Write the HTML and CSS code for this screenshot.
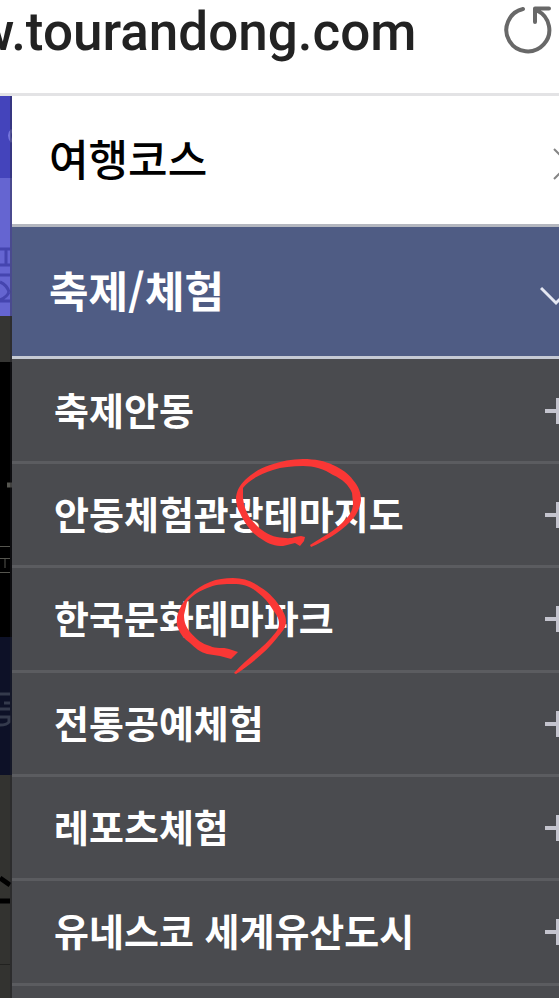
FILE: index.html
```html
<!DOCTYPE html>
<html lang="ko">
<head>
<meta charset="utf-8">
<meta name="viewport" content="width=device-width, initial-scale=1">
<title>여행코스</title>
<link rel="stylesheet" href="styles.css">
</head>
<body>
<header class="address-bar">
  <span class="address">w.tourandong.com</span>
  <button class="reload" type="button" aria-label="새로고침">
    <svg width="50" height="56" viewBox="0 0 50 56" fill="none" stroke="#686868" stroke-width="4" stroke-linecap="round" stroke-linejoin="round"><path d="M19 8A21.500 21.500 0 1 0 33 9.500M45 7.500H31V21"/></svg>
  </button>
</header>
<div class="screen">
  <div class="backdrop" aria-hidden="true">
    <div class="band band-top"><svg width="12" height="82" viewBox="0 0 12 82"><path d="M12 34Q7 39 12 46" fill="none" stroke="#7474dc" stroke-width="3"/></svg></div>
    <div class="band band-title"><svg width="12" height="138" viewBox="0 0 12 138" fill="none" stroke="#4545af" stroke-width="3"><path d="M0 71H10M0 87H10M6 71V87M0 97H10M0 104Q7 107 9 114M0 122Q7 119 9 114M0 123H10"/></svg></div>
    <div class="band band-gray"></div>
    <div class="band band-photo"><svg width="12" height="275" viewBox="0 0 12 275" fill="none" stroke="#55554f"><path d="M7 123H12" stroke-width="5"/><path d="M0 184.500H10M0 196.500H10M5 197V206M0 210.500H10"/></svg></div>
    <div class="band band-navy"><svg width="12" height="138" viewBox="0 0 12 138" fill="none" stroke="#343a4c" stroke-width="3"><path d="M0 57H10M4 66H10M0 72H10M0 80H9V85Q7 88 0 88"/></svg></div>
    <div class="band band-foot"><svg width="12" height="223" viewBox="0 0 12 223" fill="none" stroke="#000"><path d="M0 103L10 110M0 126H10" stroke-width="5"/><path d="M0 189.500H10" stroke="#222220"/></svg></div>
  </div>
  <nav class="menu">
    <a class="section" href="#course"><span>여행코스</span>
      <svg class="arrow" width="20" height="36" viewBox="0 0 20 36" fill="none" stroke="#858585" stroke-width="2"><path d="M2 3L17 18L2 33"/></svg></a>
    <a class="section section-open" href="#festival"><span>축제/체험</span>
      <svg class="arrow" width="32" height="20" viewBox="0 0 32 20" fill="none" stroke="#e4e7f2" stroke-width="3"><path d="M1 2L16 17L31 2"/></svg></a>
    <ul class="submenu">
      <li><a href="#1">축제안동</a><button class="expand" type="button" aria-label="축제안동 펼치기"></button></li>
      <li><a href="#2">안동체험관광테마지도</a><button class="expand" type="button" aria-label="안동체험관광테마지도 펼치기"></button>
        <svg class="pen pen-map" width="130" height="92" viewBox="0 0 130 92" aria-hidden="true"><path d="M3 38C4 31 7 26 12 21C19 14 28 9 37 6C48 2 59 0 70 0C82 0 92 2 100 6C109 10 116 15 120 21C126 28 128 34 128 41C127 50 123 57 117 63C106 74 92 82 78 88L77 86C91 77 103 71 112 61C117 56 120 51 120 44L119 34C116 26 109 20 100 16C91 10 81 7 70 7C59 7 49 8 40 11C27 15 16 21 10 29L10 39C11 47 13 53 17 59C24 68 33 76 44 78C51 79 57 80 62 78L68 77L72 78L71 82L67 87L62 84L50 87C42 87 36 85 30 81C19 75 12 65 7 54C4 49 3 44 3 38Z"/></svg></li>
      <li><a href="#3">한국문화테마파크</a><button class="expand" type="button" aria-label="한국문화테마파크 펼치기"></button>
        <svg class="pen pen-park" width="112" height="98" viewBox="0 0 112 98" aria-hidden="true"><path d="M0 40C2 31 7 23 13 18C19 12 25 8 33 5C40 2 48 1 56 1C66 1 75 4 83 10C93 16 100 24 105 33C108 37 109 41 109 45C109 51 104 56 100 61C90 74 74 87 59 97L57 96C70 81 88 70 99 55C101 52 102 50 102 46C102 41 99 37 96 33C92 26 87 20 80 15C73 9 65 7 56 7C48 7 40 7 33 10C24 13 15 18 10 25L7 38C7 45 9 50 13 55C19 62 25 67 33 69C39 72 46 70 52 72L61 75L54 82L43 79L30 77C23 75 18 71 13 66C7 62 3 57 1 51C-1 47 0 44 0 40Z"/></svg></li>
      <li><a href="#4">전통공예체험</a><button class="expand" type="button" aria-label="전통공예체험 펼치기"></button></li>
      <li><a href="#5">레포츠체험</a><button class="expand" type="button" aria-label="레포츠체험 펼치기"></button></li>
      <li><a href="#6">유네스코 세계유산도시</a><button class="expand" type="button" aria-label="유네스코 세계유산도시 펼치기"></button></li>
    </ul>
  </nav>
</div>
</body>
</html>
```
FILE: styles.css
```css
* { box-sizing: border-box; }
html { background: #4a4b4f; }
body {
  margin: 0;
  min-height: 100vh;
  overflow: hidden;
  display: flex;
  flex-direction: column;
  font-family: "Noto Sans CJK KR", sans-serif;
}
a { color: inherit; text-decoration: none; }
button { border: 0; padding: 0; background: none; }
svg { display: block; }

.address-bar {
  display: flex;
  align-items: flex-start;
  justify-content: space-between;
  height: 96px;
  padding-right: 5px;
  background: #fff;
  border-bottom: 3px solid #e3e3e5;
}
.address {
  margin-left: -25px;
  font: 500 53px/64px Roboto, sans-serif;
  color: #222;
}
.reload { margin-top: 1px; }

.screen { display: flex; flex: 1; }
.backdrop {
  width: 12px;
  flex: none;
  background: #333330;
  position: relative;
}
.backdrop::after {
  content: "";
  position: absolute;
  inset: 0 0 0 auto;
  width: 2px;
  background: rgba(35, 35, 42, 0.4);
}
.band { overflow: hidden; }
.band-top { height: 82px; background: #4444bb; }
.band-title { height: 138px; background: #6565d1; }
.band-gray { height: 46px; background: #353533; }
.band-photo { height: 275px; background: #000; }
.band-navy { height: 138px; background: #0d1127; }
.band-foot { background: #333330; }

.menu { flex: 1; min-width: 0; overflow: hidden; }
.section {
  display: flex;
  align-items: center;
  justify-content: space-between;
  height: 131px;
  padding-left: 37px;
  background: #fff;
  border-bottom: 3px solid #b4b7bf;
  font-size: 43px;
  font-weight: 500;
  line-height: 64px;
  color: #000;
}
.section span { padding-bottom: 6px; }
.section-open {
  height: 132px;
  background: #4f5c84;
  border-bottom-color: #c6cad4;
  font-weight: 700;
  color: #fff;
}
.arrow { margin: 8px -13px 0 0; }

.submenu {
  margin: 0;
  padding: 1px 0 0;
  list-style: none;
  background: #4a4b4f;
  border-bottom: 12px solid #4a4b4f;
}
.submenu li {
  position: relative;
  display: flex;
  align-items: center;
  justify-content: space-between;
  height: 104px;
  padding-left: 42px;
  border-bottom: 3px solid #5b5c60;
  font-size: 38px;
  font-weight: 700;
  line-height: 56px;
  color: #fff;
}
.submenu li:nth-child(3n) { height: 105px; }
.submenu a { padding-bottom: 4px; white-space: nowrap; }
.expand {
  flex: none;
  width: 26px;
  height: 26px;
  margin-right: -12px;
  background:
    linear-gradient(#c4c4ce, #c4c4ce) center / 4px 26px no-repeat,
    linear-gradient(#c4c4ce, #c4c4ce) center / 26px 4px no-repeat;
}
.pen { position: absolute; fill: #fa3735; overflow: visible; }
.pen-map { left: 221px; top: -5px; }
.pen-park { left: 165px; top: 9px; }
```
